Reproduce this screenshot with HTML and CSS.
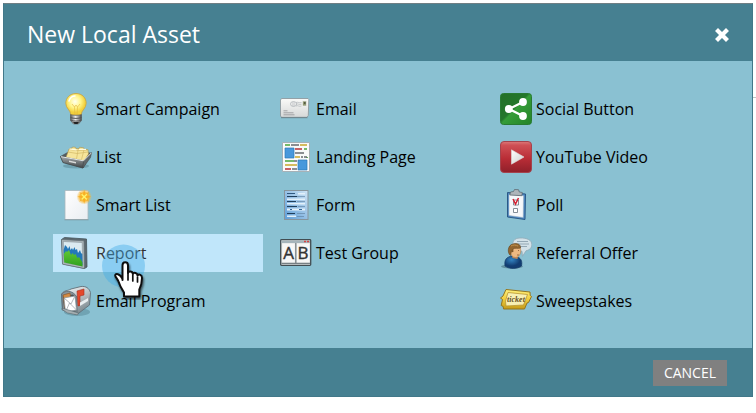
FILE: index.html
```html
<!DOCTYPE html>
<html lang="en">
<head>
<meta charset="utf-8">
<title>New Local Asset</title>
<link rel="stylesheet" href="styles.css">
</head>
<body>
<div class="page-rule"></div>
<section class="dialog" role="dialog" aria-labelledby="dialog-title">
  <header class="dialog-header">
    <h1 class="dialog-title" id="dialog-title">New Local Asset</h1>
    <button class="close" type="button" aria-label="Close">
      <svg viewBox="0 0 14 14" width="14" height="14"><path d="M3 3 11 11M11 3 3 11" stroke="#fff" stroke-width="4.2" stroke-linecap="square" stroke-linejoin="round"/></svg>
    </button>
  </header>

  <div class="assets">
    <ul class="asset-column">
      <li><button class="asset" type="button">
        <svg class="icon" viewBox="0 0 32 32">
          <defs><radialGradient id="bulb" cx=".45" cy=".38"><stop offset="0" stop-color="#fffff0"/><stop offset=".55" stop-color="#fff68c"/><stop offset="1" stop-color="#f2d03c"/></radialGradient>
          <linearGradient id="screw"><stop offset="0" stop-color="#555"/><stop offset=".45" stop-color="#eee"/><stop offset="1" stop-color="#444"/></linearGradient></defs>
          <path d="M16 .5C9.800.500 5.800 5 5.800 10.200c0 5.200 4.700 6.800 5.200 11.800h10c.5-5 5.200-6.600 5.200-11.800C26.200 5 22.200.5 16 .5Z" fill="url(#bulb)" stroke="#c9a23c" stroke-width=".8"/>
          <path d="m12 11 2.500 3 1.500-2 1.500 2 2.500-3M14.500 14l.5 8M17.500 14l-.5 8" fill="none" stroke="#e2b43c" stroke-width=".6"/>
          <path d="M9 8c1-3 3-5 6-5" fill="none" stroke="#fff" stroke-width="1.500" stroke-linecap="round"/>
          <path d="M10.500 21.500c3 1.200 8 1.200 11 0v6L18.500 31h-5l-3-3.500Z" fill="url(#screw)" stroke="#575757" stroke-width=".6"/>
          <path d="M10.500 24.500c3 1.200 8 1.200 11 0M10.800 27.200c3 1.200 7.500 1.200 10.400 0" fill="none" stroke="#555" stroke-width="1"/>
          <path d="M13 29h6l-1.500 2h-3Z" fill="#222"/>
        </svg>Smart Campaign</button></li>
      <li><button class="asset" type="button">
        <svg class="icon" viewBox="0 0 32 32">
          <defs><linearGradient id="tray" x2="0" y2="1"><stop offset="0" stop-color="#a5aaab"/><stop offset="1" stop-color="#3f4447"/></linearGradient></defs>
          <ellipse cx="16" cy="25" rx="13" ry="2.500" fill="#335c68" opacity=".3"/>
          <path d="m.5 15.500 8-4.500L31.500 12l-5 9L23 27 3 21.500Z" fill="#555c60" stroke="#4a5154" stroke-width=".7"/>
          <path d="m6 16.500 3-8.500 2-1 1 .2.500-1.200 3 .3.400 1.200 3.100.2.500-1.400 4 .4.500 1.400 4 .6.500 4.300-4.500 7.500Z" fill="#f6e59a" stroke="#a8924c" stroke-width=".6"/>
          <path d="m9 8.500 8 1L28 9M8 11l9 1.500 11-1.500M18 9.500 16.500 18M24 9l-2.500 9.500" fill="none" stroke="#d3b967" stroke-width=".7"/>
          <path d="m9.500 8 7 .9M19 8.500l7-.2" stroke="#fffbe0" stroke-width="1.200"/>
          <path d="m.5 15.500 23 4.300L23 27 3 21.500Z" fill="url(#tray)" stroke="#42494c" stroke-width=".6"/>
          <path d="m23.500 19.800 8-8.300-1 5L23 27Z" fill="#606769" stroke="#42494c" stroke-width=".5"/>
          <path d="m1 15.700 22.500 4.100 8-8" fill="none" stroke="#e4e8e8" stroke-width="1"/>
          <path d="m9 19.500 7 1.400v1.700l-7-1.500Z" fill="#d9dbda"/>
        </svg>List</button></li>
      <li><button class="asset" type="button">
        <svg class="icon" viewBox="0 0 32 32">
          <defs><linearGradient id="sheet" x2="1" y2="1"><stop offset="0" stop-color="#fff"/><stop offset="1" stop-color="#e9edf1"/></linearGradient>
          <radialGradient id="glow"><stop offset="0" stop-color="#ffe44c"/><stop offset=".55" stop-color="#f9b52c" stop-opacity=".9"/><stop offset="1" stop-color="#f8c040" stop-opacity="0"/></radialGradient></defs>
          <path d="M5 1.500h23v29H5Z" fill="url(#sheet)" stroke="#a8b7bd" stroke-width=".8"/>
          <path d="M4.500 30.800h24" stroke="#71858c" stroke-width=".6"/>
          <circle cx="24.200" cy="7.800" r="7.800" fill="url(#glow)"/>
          <path d="m24.200.8 1.300 4.400 3.700-2.400-2.400 3.700 4.400 1.300-4.400 1.300 2.400 3.700-3.700-2.400-1.300 4.400-1.300-4.400-3.700 2.400 2.400-3.700-4.400-1.300 4.400-1.300-2.400-3.700 3.700 2.400Z" fill="#f8aa1c" opacity=".8"/>
          <path d="m21.600 5.200 5.200 5.200M26.800 5.200l-5.200 5.200" stroke="#fff46c" stroke-width="1.400"/>
        </svg>Smart List</button></li>
      <li><button class="asset selected" type="button">
        <svg class="icon" viewBox="0 0 32 32">
          <defs><linearGradient id="grass" x2="0" y2="1"><stop offset="0" stop-color="#62c934"/><stop offset="1" stop-color="#2fa01f"/></linearGradient></defs>
          <path d="m1.500 2.500 3-2L26.500 2l.5 28-2.500 1.500L3 27Z" fill="#5d686f" stroke="#45545b" stroke-width=".8"/>
          <path d="m1.500 2.500 22.500 1.300.5 27.700L2.500 27.200Z" fill="#aeb8bc" stroke="#626e74" stroke-width=".7"/>
          <path d="m3.300 4.500 18.900 1 .4 23.400-18.400-3.300Z" fill="#dcebf1" stroke="#7b858b" stroke-width=".5"/>
          <path d="m3.600 13 1.400-5 2 2 1 2 1.500-3 1 4 1.500-2 1 2 1.500-3 1 3 1.500-1 1 4 2-3 1 3 1.300 1 .3 11L4 23Z" fill="#2478b8"/>
          <path d="m3.800 17 2.200-3 1 1 2-2 2 5 1.500-2 1.500 2 1.500-1 2 4 1.500-1 3.300 5 .3 4.500L4.200 25.500Z" fill="url(#grass)"/>
        </svg>Report</button></li>
      <li><button class="asset" type="button">
        <svg class="icon" viewBox="0 0 32 32">
          <defs><linearGradient id="mailbox" x2=".5" y2="1"><stop offset="0" stop-color="#fff"/><stop offset="1" stop-color="#7e8b91"/></linearGradient></defs>
          <ellipse cx="17" cy="27" rx="13" ry="4" fill="#234b59" opacity=".25"/>
          <path d="M1.500 9C4 5 8 6 11 4L21 1.500c5-.5 8 1.500 9.500 6L29.500 20 17 29.500 2.500 25Z" fill="url(#mailbox)" stroke="#617179" stroke-width=".9"/>
          <path d="M1.800 9c3-4 11-4 15 3l.2 17.500L2.500 25Z" fill="#89949a" stroke="#56666d" stroke-width=".8"/>
          <path d="m3 11 10-1.500 2.500 2.500v15L4 24Z" fill="#4e5355"/>
          <path d="m3 10 7-2 2 14-7 2Z" fill="#d48b42" stroke="#824e24" stroke-width=".6"/>
          <path d="m4 13 11-2 1.500 14-11 2Z" fill="#fff" stroke="#87959c" stroke-width=".7"/>
          <path d="m4 13 7 6 4-8M5.500 27l4-9 7 7" fill="none" stroke="#929a9f" stroke-width=".7"/>
          <path d="m1.500 24 6 4 10 2 1-2-15-4.500Z" fill="#a4adb0" stroke="#586970" stroke-width=".6"/>
          <path d="m17 6 7-2v6l-4 1v9.500l-2 .5Z" fill="#e4482c" stroke="#a42f20" stroke-width=".6"/>
          <path d="M20 17.500 28 13v3l-8 5Z" fill="#e9eef0"/>
        </svg>Email Program</button></li>
    </ul>

    <ul class="asset-column">
      <li><button class="asset" type="button">
        <svg class="icon" viewBox="0 0 32 32">
          <defs><linearGradient id="paper" x2="0" y2="1"><stop offset="0" stop-color="#fafaf8"/><stop offset="1" stop-color="#d6d8d8"/></linearGradient></defs>
          <path d="M1.500 5.500h26.500l.8 1-.5 16-1.300 1.800H1.500L.5 23V7Z" fill="url(#paper)" stroke="#8d9a9f" stroke-width=".9"/>
          <path d="M1 24.700h26.500" stroke="#62777f" stroke-width=".8"/>
          <rect x="22.500" y="8" width="4" height="5" fill="#8f9872" stroke="#eee" stroke-width=".7"/><path d="M24 9h1.500v2H24Z" fill="#555a44"/>
          <ellipse cx="13.500" cy="11" rx="3" ry="2.500" fill="none" stroke="#9ca2a7" stroke-width=".6"/>
          <path d="M12 10h3M12 12h3M16 9.500c2-1 3 1 5.500 0M16 11.200c2-1 3 1 5.500 0M16 13c2-1 3 1 5.500 0" fill="none" stroke="#a5aaae" stroke-width=".6"/>
          <path d="M3.500 17.800h4M3.500 19.800h10M3.500 21.800h11" stroke="#86888c" stroke-width=".7"/>
        </svg>Email</button></li>
      <li><button class="asset" type="button">
        <svg class="icon" viewBox="0 0 32 32">
          <path d="M2.500 1.500h27v29h-27Z" fill="#f9fafa" stroke="#a6b1b7"/>
          <path d="M5 7h9v10H5ZM18 19h9v10h-9Z" fill="#4898dc" stroke="#2c78b8" stroke-width=".7"/>
          <path d="M5 4h5M24 8h3M5 20h9M27 16v1" stroke="#49a53b" stroke-width="1.700"/>
          <path d="M15 8h7M5 28h6" stroke="#b72f36" stroke-width="1.700"/>
          <path d="M20 4h7M15 16h5M5 24h12" stroke="#c8a82d" stroke-width="1.700"/>
          <path d="M11 4h8M15 12h9M21 16h2M24 16h3M14 20h3M12 28h5" stroke="#676b70" stroke-width="1.700"/>
        </svg>Landing Page</button></li>
      <li><button class="asset" type="button">
        <svg class="icon" viewBox="0 0 32 32">
          <defs><linearGradient id="form" x1="1" x2="0" y2="1"><stop offset="0" stop-color="#cfe4f5"/><stop offset="1" stop-color="#5d9dd7"/></linearGradient></defs>
          <rect x="4.500" y="1.500" width="23.500" height="29" fill="url(#form)" stroke="#87959c"/>
          <path d="M7 4.500h8" stroke="#315a80"/><path d="M7 7.500h10M7 12.500h9M7 17.500h10M7 24.500h8" stroke="#203f5c" stroke-width="1.200"/>
          <path d="M7 9.500h18v1.500H7ZM7 14h18v1.500H7ZM7 19.500h18v2H7ZM7 26.500h9v1.500H7ZM18 4h7v1.500h-7Z" fill="#e2f0fa"/>
          <path d="M17 7.500h8M17 12.500h8M18 17.500h7M17 24.500h8M17 27.500h7" stroke="#6688a8" stroke-width=".7"/>
          <path d="M10 20.500h2M19 20.500h3" stroke="#336699"/>
        </svg>Form</button></li>
      <li><button class="asset" type="button">
        <svg class="icon" viewBox="0 0 32 32">
          <rect x=".7" y="2.700" width="30" height="25.600" rx=".8" fill="#dce0e1" stroke="#414d52" stroke-width="1.300"/>
          <path d="M1.500 3.500h28.500V6H1.500Z" fill="#a6b5bb"/><path d="M24 4.500h2M27 4.500h2" stroke="#d54343" stroke-width="1.500"/>
          <path d="M2.200 6.500h12.600v19.300H2.200ZM16.800 6.500h12.600v19.300H16.800Z" fill="#f7f7f6"/>
          <path d="M15.800 6v21M1.500 26.300h28.500" stroke="#777f83" stroke-width="1.200"/>
          <text class="split-letter" x="8.500" y="22" text-anchor="middle">A</text><text class="split-letter" x="23" y="22" text-anchor="middle">B</text>
        </svg>Test Group</button></li>
    </ul>

    <ul class="asset-column">
      <li><button class="asset" type="button">
        <svg class="icon" viewBox="0 0 32 32">
          <defs><linearGradient id="share" x2="1" y2="1"><stop offset="0" stop-color="#246f28"/><stop offset=".45" stop-color="#24772b"/><stop offset=".5" stop-color="#359c37"/><stop offset="1" stop-color="#238328"/></linearGradient></defs>
          <rect x=".5" y=".5" width="31" height="31" rx="3" fill="url(#share)" stroke="#287b32"/>
          <path d="M23.500 8.800 9 16l14.500 7.200" fill="none" stroke="#fff" stroke-width="2.400"/>
          <circle cx="23" cy="9" r="3.900" fill="#fff"/><circle cx="8.800" cy="16" r="3.900" fill="#fff"/><circle cx="23" cy="23" r="3.900" fill="#fff"/>
        </svg>Social Button</button></li>
      <li><button class="asset" type="button">
        <svg class="icon" viewBox="0 0 32 32">
          <defs><linearGradient id="video" x2="0" y2="1"><stop offset="0" stop-color="#db7979"/><stop offset=".12" stop-color="#cf5055"/><stop offset=".55" stop-color="#b92d36"/><stop offset="1" stop-color="#8f202a"/></linearGradient>
          <linearGradient id="play" x2="1" y2="1"><stop offset="0" stop-color="#fff"/><stop offset="1" stop-color="#ccc"/></linearGradient></defs>
          <rect x=".5" y=".5" width="31" height="31" rx="3.500" fill="url(#video)" stroke="#a4434d"/>
          <path d="M11.500 8.800 24 16l-12.500 7.200Z" fill="url(#play)" stroke="#dedede" stroke-width=".6" stroke-linejoin="round"/>
        </svg>YouTube Video</button></li>
      <li><button class="asset" type="button">
        <svg class="icon" viewBox="0 0 32 32">
          <path d="m7.500 3.500 18 1.500-.5 25.500L7.500 28Z" fill="#4f8ac4" stroke="#244f7e" stroke-width=".9"/>
          <path d="m9 5.500 14.500 1.200-.3 21.800L9 26.500Z" fill="#f5f7fa" stroke="#9dafbf" stroke-width=".5"/>
          <path d="m10.500 3 3-.5 1-2 4 .2.800 2.300 3 .5-.5 3.200-12-.7Z" fill="#aeb5ba" stroke="#566067" stroke-width=".7"/>
          <path d="M13.500 11h5v5h-5ZM13.500 19.500h4v4h-4Z" fill="#fff" stroke="#66727e" stroke-width=".8"/>
          <path d="m13 10 2.500 5 3-6" fill="none" stroke="#d51f31" stroke-width="1.500"/>
        </svg>Poll</button></li>
      <li><button class="asset" type="button">
        <svg class="icon" viewBox="0 0 32 32">
          <defs><radialGradient id="shirt" cx=".4" cy=".3"><stop offset="0" stop-color="#3484c2"/><stop offset="1" stop-color="#123d72"/></radialGradient></defs>
          <path d="M20 1C14 1 12 5 13 9c.5 3 3 5 7 5l2 .3.500 5 3.500-5.500c4-1 5.800-3 5.800-6.300C31.800 3 27 .8 20 1Z" fill="#d3e1e8" stroke="#91abb8" stroke-width=".8"/>
          <path d="M17 4.500h11M18 7h11M18 9.500h9" stroke="#94a8b5" stroke-width="1"/>
          <ellipse cx="12" cy="29.500" rx="11" ry="2" fill="#244958" opacity=".4"/>
          <path d="M5 29c-1-7 2-9 7-10l5 1c4 1 5.500 4 4.500 9-4 3-12 3.500-16.500 0Z" fill="url(#shirt)" stroke="#143b68" stroke-width=".7"/>
          <path d="m12 17 .5 4 5 1 .5-4Z" fill="#c98b55"/>
          <ellipse cx="15.500" cy="14" rx="5.300" ry="6.500" fill="#efb981" stroke="#aa774a" stroke-width=".5"/>
          <path d="M10.500 18.500C7 16 7.500 8 13 7c4-1.500 8 .5 7.500 4-3 1-5.500-.5-7.500 1v3l-1.500-1Z" fill="#93662f" stroke="#64431c" stroke-width=".6"/>
          <path d="M11 9c2-1.500 5-1 7 0" fill="none" stroke="#c1914d"/>
          <path d="M18.500 13v1M17 18h2" stroke="#774626" stroke-width=".7"/>
        </svg>Referral Offer</button></li>
      <li><button class="asset" type="button">
        <svg class="icon" viewBox="0 0 32 32">
          <defs><linearGradient id="gold" x2="0" y2="1"><stop offset="0" stop-color="#fff07c"/><stop offset=".5" stop-color="#efcd3e"/><stop offset="1" stop-color="#c49a19"/></linearGradient></defs>
          <path d="m6 4.500 24 2.500.2 3.500 1.300 1-3 6-1.500.5-2.500 6L3.500 24 3.200 21.500l-2-1L2.500 14.500.500 13l2.500-2Z" fill="url(#gold)" stroke="#94751e" stroke-width="1"/>
          <path d="m8 7.500 19.500 2-4 10.500L6 21l-.5-5Z" fill="#f7efb4" stroke="#b99632" stroke-width=".8"/>
          <text class="ticket-label" x="16" y="17" text-anchor="middle">ticket</text>
        </svg>Sweepstakes</button></li>
    </ul>
  </div>

  <footer class="dialog-footer"><button class="cancel" type="button">CANCEL</button></footer>

  <svg class="pointer" viewBox="0 0 44 56" aria-hidden="true">
    <defs><filter id="hand-shadow" x="-30%" y="-30%" width="170%" height="170%"><feDropShadow dx="1" dy="2" stdDeviation="1.300" flood-opacity=".6"/></filter></defs>
    <circle cx="21.500" cy="22" r="21.500" fill="#40ace8" opacity=".42"/>
    <path filter="url(#hand-shadow)" d="M20.500 36V21.500c0-4.300 5.500-4.300 5.500 0V29c.5-2.300 4.800-1.800 4.800 1 1-2 4.700-1.200 4.700 1.500 1.500-1.800 4.500-.8 4.500 2.500 0 6-1 8-2.700 11.500v7H22v-4c-2-3-4-6-5.500-11-1-3-3-4-3.300-6-.2-2.500 5-2.200 7.300 3.500Z" fill="#fff" stroke="#111" stroke-width="2" stroke-linejoin="round"/>
    <path d="M26 29v7M30.800 31v6M35.500 33v5" stroke="#111" stroke-width="1.700" stroke-linecap="round"/>
  </svg>
</section>
</body>
</html>
```
FILE: styles.css
```css
* {
  box-sizing: border-box;
}

body {
  margin: 3px;
  background: #fff;
  color: #000;
  font-family: "Open Sans", "Noto Sans", sans-serif;
  font-size: 16px;
}

button {
  border: 0;
  padding: 0;
  background: none;
  color: inherit;
  font: inherit;
  cursor: pointer;
}

.page-rule {
  position: absolute;
  top: 97px;
  right: 0;
  width: 3px;
  height: 1px;
  background: #c4c4c4;
}

.dialog {
  position: relative;
  border: 1px solid #427889;
  border-top-color: #6f7f84;
  background: #8ac1d2;
}

.dialog-header,
.dialog-footer {
  display: flex;
  align-items: center;
  background: #468091;
  color: #fff;
}

.dialog-header {
  justify-content: space-between;
  padding: 14px 23px 10px;
}

.dialog-title {
  margin: 0;
  font-size: 23px;
  font-weight: 400;
  line-height: 33px;
}

.close svg {
  display: block;
}

.assets {
  display: grid;
  grid-template-columns: repeat(3, 1fr);
  gap: 10px;
  padding: 29px 49px 28px;
}

.asset-column {
  display: flex;
  flex-direction: column;
  gap: 10px;
  margin: 0;
  padding: 0;
  list-style: none;
}

.asset {
  display: flex;
  align-items: center;
  gap: 4px;
  width: 100%;
  padding: 3px 7px;
  text-align: left;
  line-height: 32px;
}

.asset.selected {
  background: #c0e6fa;
  color: #333;
}

.icon {
  flex: none;
  width: 32px;
  height: 32px;
}

.split-letter {
  font: 17px "Open Sans", sans-serif;
  fill: #333;
  stroke: #333;
  stroke-width: 0.4px;
}

.ticket-label {
  font: italic bold 8px "Liberation Serif", serif;
  fill: #66501f;
}

.dialog-footer {
  justify-content: flex-end;
  padding: 12px 25px 10px;
}

.cancel {
  padding: 0 11px;
  background: #808080;
  font-size: 14px;
  line-height: 26px;
}

.pointer {
  position: absolute;
  top: 240px;
  left: 98px;
  width: 44px;
  height: 56px;
  pointer-events: none;
}
```
